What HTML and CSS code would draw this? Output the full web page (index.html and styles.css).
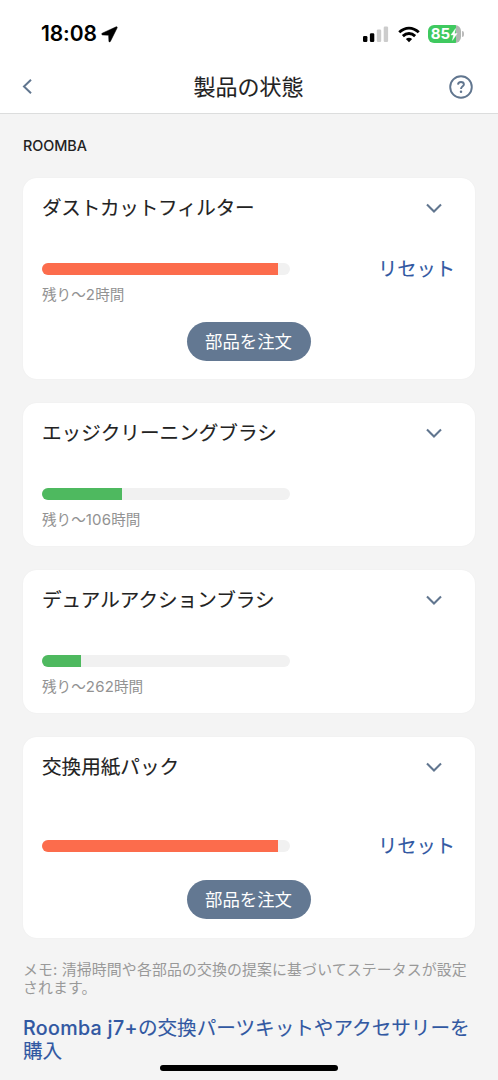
FILE: index.html
```html
<!DOCTYPE html>
<html lang="ja">
<head>
<meta charset="utf-8">
<meta name="viewport" content="width=device-width, initial-scale=1">
<title>製品の状態</title>
<link rel="stylesheet" href="styles.css">
</head>
<body>
<div class="screen">
  <header class="header">
    <div class="status">
      <span class="clock">18:08</span>
      <svg class="location" width="17" height="17" viewBox="0 0 17 17"><path d="M15.2.8 1.2 7.2Q-.1 8.3 1.5 8.9L7.6 9.2 7.9 15.2Q8.4 16.8 9.4 15.4L16.2 1.8Q16.4.4 15.2.8Z" fill="#000" stroke="#000" stroke-width=".5"/></svg>
      <div class="indicators">
        <svg width="26" height="17" viewBox="0 0 26 17"><rect x="0" y="10" width="4.4" height="6" rx="1.2"/><rect x="6.9" y="7.3" width="4.4" height="8.7" rx="1.2"/><rect x="13.8" y="3.6" width="4.4" height="12.4" rx="1.2" fill="#ccc"/><rect x="20.7" y=".5" width="4.4" height="15.5" rx="1.2" fill="#ccc"/></svg>
        <svg class="wifi" width="22" height="17" viewBox="0 0 23 17"><g fill="none" stroke="#000" stroke-width="3"><path d="M1.3 6.2Q6 1.8 11.5 1.8T21.7 6.2"/><path d="M5.1 10.2Q8 7.4 11.5 7.4T17.9 10.2"/></g><path d="M8.2 13.2Q11.5 10.6 14.8 13.2L11.5 16.5Z"/></svg>
        <div class="battery">
          <span class="level">85</span>
          <svg class="bolt" width="8" height="13" viewBox="0 0 7 13"><path d="M5.1.5.4 7H3L1.9 12.4 6.7 5.6H4.1Z" fill="#fff" stroke="#fff" stroke-width=".4"/></svg>
        </div>
        <span class="battery-tip"></span>
      </div>
    </div>
    <nav class="nav">
      <svg width="12" height="18" viewBox="0 0 12 18"><path d="M9 1.8 2 8.5l7 6.7" fill="none" stroke="#61768f" stroke-width="2"/></svg>
      <h1 class="title">製品の状態</h1>
      <svg width="24" height="24" viewBox="0 0 24 24"><g fill="none" stroke="#61768f"><circle cx="12" cy="12" r="10.8" stroke-width="1.9"/><path d="M9 9.6Q9.1 7 12 7T14.9 9.5C14.9 11.4 12 11.4 12 14.1" stroke-width="1.9"/></g><circle cx="12" cy="16.7" r="1.25" fill="#61768f"/></svg>
    </nav>
  </header>
  <main class="content">
    <h2 class="section">ROOMBA</h2>
    <div class="cards">
      <section class="card">
        <div class="card-head"><h3 class="name filter-name">ダストカットフィルター</h3><svg class="chevron" width="18" height="12" viewBox="0 0 18 12"><path d="m2 2.5 7 7 7-7"/></svg></div>
        <div class="usage"><div class="track"><div class="fill worn" style="width:95.2%"></div></div><a class="reset">リセット</a></div>
        <p class="remaining">残り～<span class="hours">2</span>時間</p>
        <button class="order">部品を注文</button>
      </section>
      <section class="card">
        <div class="card-head"><h3 class="name">エッジクリーニングブラシ</h3><svg class="chevron" width="18" height="12" viewBox="0 0 18 12"><path d="m2 2.5 7 7 7-7"/></svg></div>
        <div class="usage"><div class="track"><div class="fill" style="width:32.2%"></div></div></div>
        <p class="remaining">残り～<span class="hours">106</span>時間</p>
      </section>
      <section class="card">
        <div class="card-head"><h3 class="name">デュアルアクションブラシ</h3><svg class="chevron" width="18" height="12" viewBox="0 0 18 12"><path d="m2 2.5 7 7 7-7"/></svg></div>
        <div class="usage"><div class="track"><div class="fill" style="width:15.8%"></div></div></div>
        <p class="remaining">残り～<span class="hours">262</span>時間</p>
      </section>
      <section class="card no-estimate">
        <div class="card-head"><h3 class="name">交換用紙パック</h3><svg class="chevron" width="18" height="12" viewBox="0 0 18 12"><path d="m2 2.5 7 7 7-7"/></svg></div>
        <div class="usage"><div class="track"><div class="fill worn" style="width:95.2%"></div></div><a class="reset">リセット</a></div>
        <button class="order">部品を注文</button>
      </section>
    </div>
    <p class="note">メモ: 清掃時間や各部品の交換の提案に基づいてステータスが設定<br>されます。</p>
    <a class="shop"><span class="model">Roomba j7+</span>の交換パーツキットやアクセサリーを<br>購入</a>
  </main>
  <div class="home-indicator"></div>
</div>
</body>
</html>
```
FILE: styles.css
```css
* { box-sizing: border-box; }
body { margin: 0; background: #f4f4f4; }
h1, h2, h3, p { margin: 0; font-weight: 500; }
svg { display: block; flex: none; }

.screen {
  position: relative;
  width: 498px;
  height: 1080px;
  overflow: hidden;
  color: #222;
  background: #f4f4f4;
  font-family: Inter, "Noto Sans CJK JP", sans-serif;
}

.header {
  height: 114px;
  background: #fff;
  border-bottom: 1px solid #dcdddd;
}
.status {
  display: flex;
  align-items: center;
  height: 60px;
  padding: 8px 34px 0 41px;
  color: #000;
}
.clock { width: 55px; font-size: 21px; font-weight: 600; line-height: 24px; letter-spacing: -.1px; }
.location { margin-left: 5px; }
.indicators { display: flex; align-items: center; margin-left: auto; }
.wifi { margin-left: 9px; }
.battery {
  display: flex;
  align-items: center;
  justify-content: center;
  width: 33px;
  height: 18px;
  margin-left: 8px;
  border-radius: 6px;
  background: linear-gradient(90deg, #3fc95f 86%, #b1b5b2 86%);
}
.level { color: #fff; font-size: 15px; font-weight: 700; line-height: 18px; letter-spacing: .1px; }
.battery-tip { width: 2px; height: 6px; margin-left: 1px; border-radius: 0 2px 2px 0; background: #bbb; }

.nav {
  display: flex;
  align-items: center;
  justify-content: space-between;
  height: 53px;
  padding: 0 25px 0 22px;
}
.title { padding-left: 14px; font-size: 22px; line-height: 32px; }
.title, .name, .reset, .shop { font-weight: 400; -webkit-text-stroke: .12px currentColor; }

.content { padding: 20px 23px 0; }
.section { height: 24px; font-size: 14.4px; line-height: 24px; letter-spacing: -.05px; }
.cards { display: flex; flex-direction: column; gap: 24px; margin-top: 20px; }
.card {
  display: flex;
  flex-direction: column;
  padding: 15px 20px 18px 19px;
  border-radius: 14px;
  background: #fff;
  box-shadow: 0 0 2px rgb(0 0 0 / 4%);
}
.card-head { display: flex; align-items: center; justify-content: space-between; height: 30px; padding-right: 12px; }
.name { font-size: 19.6px; line-height: 30px; }
.filter-name { letter-spacing: -.25px; }
.chevron { fill: none; stroke: #61768f; stroke-width: 2.1; }
.usage { display: flex; align-items: center; justify-content: space-between; height: 30px; margin-top: 31px; }
.track { width: 248px; height: 12px; overflow: hidden; border-radius: 6px; background: #f1f1f1; }
.fill { height: 100%; background: #4eb95f; }
.fill.worn { background: #fc6c4c; }
.reset { color: #3158a2; font-size: 19.3px; line-height: 32px; }
.remaining { height: 19px; color: #929292; font-size: 14.6px; font-weight: 400; line-height: 21px; }
.hours { letter-spacing: .2px; font-size: 15px; }
.order {
  align-self: center;
  width: 124px;
  height: 39px;
  margin-top: 18.5px;
  margin-bottom: .5px;
  padding: 0 0 2px;
  border: 0;
  border-radius: 20px;
  background: #637892;
  color: #fff;
  font: 400 17.4px/37px "Noto Sans CJK JP", sans-serif;
}
.no-estimate .usage { margin-top: 49px; }
.no-estimate .order { margin-top: 19px; }

.note { margin-top: 23px; color: #999; font-size: 14.9px; font-weight: 400; line-height: 18px; letter-spacing: .13px; white-space: nowrap; }
.shop { display: block; margin-top: 20px; color: #3158a2; font-size: 19.6px; line-height: 23.5px; white-space: nowrap; }
.model { font-weight: 500; letter-spacing: .35px; }

.home-indicator {
  position: absolute;
  bottom: 9px;
  left: 160px;
  width: 178px;
  height: 6px;
  border-radius: 3px;
  background: #000;
}
```
